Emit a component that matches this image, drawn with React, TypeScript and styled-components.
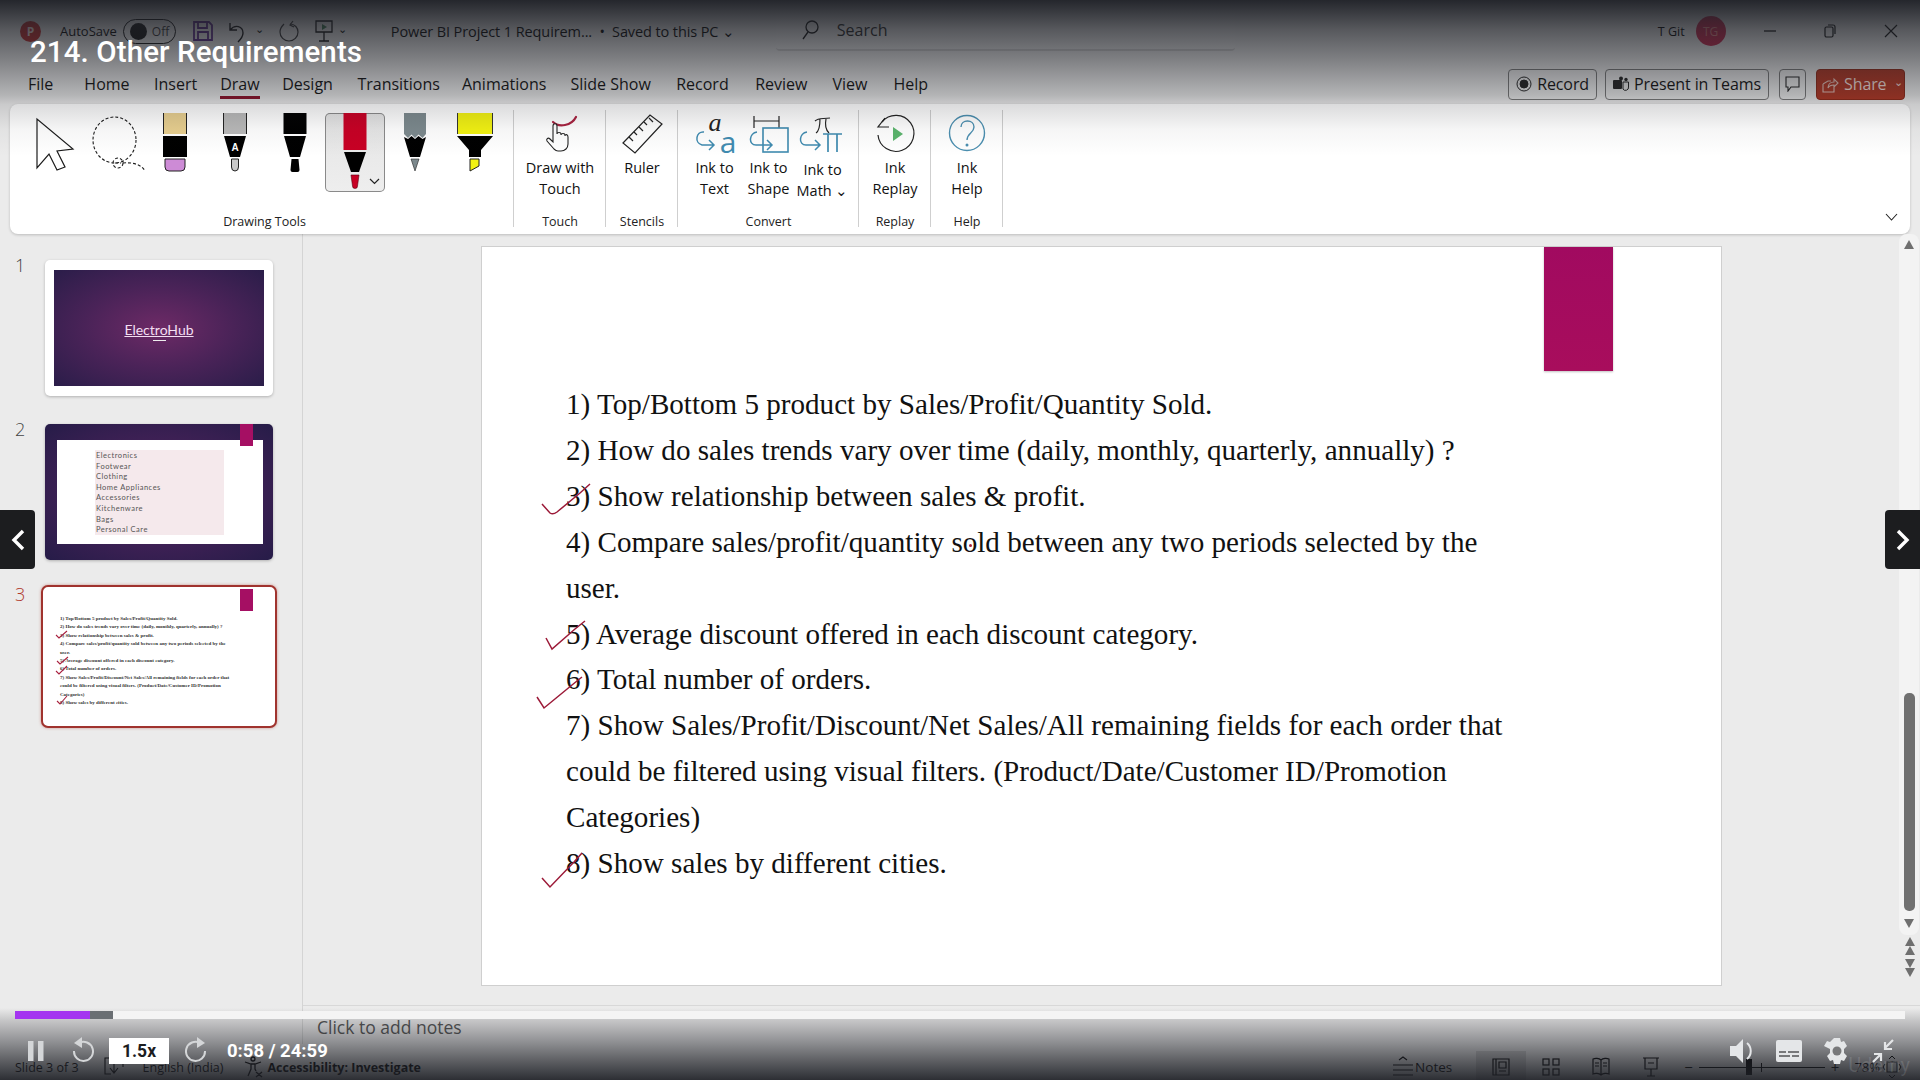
import React from "react";
import styled, { createGlobalStyle } from "styled-components";

const GlobalStyle = createGlobalStyle`
  html, body {
    margin: 0;
    padding: 0;
    background: #ebebeb;
    overflow: hidden;
  }
  * {
    box-sizing: border-box;
  }
`;

const UI_FONT = `"Open Sans", "Noto Sans", sans-serif`;

const tabs = [
  { name: "File", gap: 28 },
  { name: "Home", gap: 31 },
  { name: "Insert", gap: 24.5 },
  { name: "Draw", gap: 23, active: true },
  { name: "Design", gap: 22.5 },
  { name: "Transitions", gap: 24.5 },
  { name: "Animations", gap: 22 },
  { name: "Slide Show", gap: 24 },
  { name: "Record", gap: 25.4 },
  { name: "Review", gap: 26.5 },
  { name: "View", gap: 25 },
  { name: "Help", gap: 26 },
];

const requirements = [
  { text: "1) Top/Bottom 5 product by Sales/Profit/Quantity Sold." },
  { text: "2) How do sales trends vary over time (daily, monthly, quarterly, annually) ?" },
  { text: "3) Show relationship between sales & profit.", tick: "M-24 30 L-16 39 Q-13 41 -9 38 L14 19 L24 10" },
  { text: "4) Compare sales/profit/quantity sold between any two periods selected by the user.", dot: true },
  { text: "5) Average discount offered in each discount category.", tick: "M-20 26 L-14 37 L9 17 L19 9" },
  { text: "6) Total number of orders.", tick: "M-29 40 L-22 51 L6 28 L16 20" },
  { text: "7) Show Sales/Profit/Discount/Net Sales/All remaining fields for each order that could be filtered using visual filters. (Product/Date/Customer ID/Promotion Categories)" },
  { text: "8) Show sales by different cities.", tick: "M-24 37 L-16 46 L8 21 L16 12" },
];

const categories = [
  "Electronics",
  "Footwear",
  "Clothing",
  "Home Appliances",
  "Accessories",
  "Kitchenware",
  "Bags",
  "Personal Care",
];

const miniLines = [
  "1) Top/Bottom 5 product by Sales/Profit/Quantity Sold.",
  "2) How do sales trends vary over time (daily, monthly, quarterly, annually) ?",
  "3) Show relationship between sales & profit.",
  "4) Compare sales/profit/quantity sold between any two periods selected by the",
  "user.",
  "5) Average discount offered in each discount category.",
  "6) Total number of orders.",
  "7) Show Sales/Profit/Discount/Net Sales/All remaining fields for each order that",
  "could be filtered using visual filters. (Product/Date/Customer ID/Promotion",
  "Categories)",
  "8) Show sales by different cities.",
];

const App = () => {
  return (
    <Page>
      <GlobalStyle />
      <TitleBar>
        <AppLogo>P</AppLogo>
        <AutoSaveLabel>AutoSave</AutoSaveLabel>
        <Toggle>
          <ToggleKnob />
          Off
        </Toggle>
        <QuickIcons>
          <svg width="22" height="22" viewBox="0 0 22 22" fill="none" stroke="#5a2a8a" strokeWidth="1.8">
            <path d="M2 2h15l3 3v15H2z" />
            <path d="M6 2v6h9V2M6 20v-8h10v8" />
          </svg>
          <svg width="24" height="24" viewBox="0 0 24 24" fill="none" stroke="#111" strokeWidth="1.4">
            <path d="M3 4v7h7M3 11c5-6 13-4 13 3 0 4-3 7-5 9" />
          </svg>
          <TinyCaret>⌄</TinyCaret>
          <svg width="24" height="24" viewBox="0 0 24 24" fill="none" stroke="#333" strokeWidth="1.2">
            <path d="M16 2l-3 4 4 2M13 5c5 0 8 4 8 8a9 9 0 1 1-18 0c0-4 2-6 4-8" />
          </svg>
          <svg width="20" height="24" viewBox="0 0 20 24" fill="none" stroke="#111" strokeWidth="1.3">
            <path d="M2 2h16v11H2zM10 13v9M5 22h10" />
            <path d="M8 5l5 3-5 3z" fill="#3b7a50" stroke="none" />
          </svg>
          <TinyCaret>⌄</TinyCaret>
        </QuickIcons>
        <DocTitle>Power BI Project 1 Requirem...&nbsp; •&nbsp; Saved to this PC&nbsp;⌄</DocTitle>
        <SearchBox>
          <svg width="18" height="20" viewBox="0 0 18 20" fill="none" stroke="#111" strokeWidth="1.3">
            <circle cx="11" cy="7" r="6" />
            <path d="M7 12l-5 7" />
          </svg>
          <span>Search</span>
        </SearchBox>
        <UserName>T Git</UserName>
        <Avatar>TG</Avatar>
        <WindowButtons>
          <svg width="12" height="12" viewBox="0 0 12 12" stroke="#111" strokeWidth="1.3">
            <path d="M0 6h12" />
          </svg>
          <svg width="14" height="14" viewBox="0 0 14 14" fill="none" stroke="#111" strokeWidth="1.2">
            <rect x="2" y="3" width="8" height="10" rx="1.5" />
            <path d="M5 1h5a2 2 0 0 1 2 2v7" />
          </svg>
          <svg width="14" height="14" viewBox="0 0 14 14" stroke="#111" strokeWidth="1.2">
            <path d="M1 1l12 12M13 1L1 13" />
          </svg>
        </WindowButtons>
      </TitleBar>

      <TabRow>
        {tabs.map((tab) => (
          <Tab key={tab.name} $gap={tab.gap} $active={tab.active}>
            {tab.name}
          </Tab>
        ))}
        <TabActions>
          <RecordButton>
            <svg width="16" height="16" viewBox="0 0 16 16" fill="none" stroke="#222" strokeWidth="1">
              <circle cx="8" cy="8" r="7" />
              <circle cx="8" cy="8" r="4" fill="#222" />
            </svg>
            Record
          </RecordButton>
          <ActionButton>
            <svg width="16" height="16" viewBox="0 0 16 16" fill="#222">
              <rect x="0" y="4" width="9" height="9" rx="1" />
              <circle cx="8" cy="2.5" r="2" />
              <circle cx="13" cy="3.5" r="1.7" />
              <path d="M10 6h5.5v5a3 3 0 0 1-5.5 2z" fill="none" stroke="#222" />
            </svg>
            Present in Teams
          </ActionButton>
          <IconAction>
            <svg width="15" height="16" viewBox="0 0 15 16" fill="none" stroke="#222" strokeWidth="1.1">
              <path d="M1 1h13v10H6l-3 4v-4H1z" />
            </svg>
          </IconAction>
          <ShareButton>
            <svg width="17" height="17" viewBox="0 0 17 17" fill="none" stroke="#e4c0b8" strokeWidth="1.1">
              <path d="M1 8v8h11v-5M1 8l5-3h3M6 12c0-4 3-6 6-6V3l4 4-4 4V9c-3 0-5 1-6 3z" />
            </svg>
            Share
            <ShareCaret>⌄</ShareCaret>
          </ShareButton>
        </TabActions>
      </TabRow>

      <Ribbon>
        <RibbonGroup $width={504}>
          <ToolRow>
            <Tool>
              <svg width="60" height="79" viewBox="0 0 60 79" fill="#fff" stroke="#1c1c1c" strokeWidth="1.2">
                <path d="M13 6v49l12-14 8 16 8-3-8-16 16-2z" transform="translate(-1 0)" />
              </svg>
            </Tool>
            <Tool>
              <svg width="60" height="79" viewBox="0 0 60 79" fill="none" stroke="#1c1c1c" strokeWidth="1.1" strokeDasharray="3 2">
                <ellipse cx="29.5" cy="27" rx="21.5" ry="23" />
                <circle cx="33" cy="50" r="5" />
                <path d="M30 50h6M38 50c10-1 19 2 22 8" />
              </svg>
            </Tool>
            <Tool>
              <svg width="60" height="79" viewBox="0 0 60 79">
                <rect x="18.5" y="0" width="23" height="21" fill="#e8cf8f" />
                <path d="M18.5 0v21M41.5 0v21" stroke="#222" />
                <rect x="18" y="23" width="24" height="21" fill="#000" />
                <path d="M20 46h20v8a4 4 0 0 1-4 4H24a4 4 0 0 1-4-4z" fill="#cd8bd6" stroke="#222" />
              </svg>
            </Tool>
            <Tool>
              <svg width="60" height="79" viewBox="0 0 60 79">
                <rect x="18.5" y="0" width="23" height="21" fill="#b9b9b9" />
                <path d="M18.5 0v21M41.5 0v21" stroke="#222" />
                <path d="M19 23h22l-6 21H25z" fill="#000" />
                <text x="30" y="38" textAnchor="middle" fontSize="10" fontWeight="700" fontFamily="Liberation Sans" fill="#fff">A</text>
                <path d="M26.5 46h7v8a3.5 4 0 0 1-7 0z" fill="#c9c9c9" stroke="#222" />
              </svg>
            </Tool>
            <Tool>
              <svg width="60" height="79" viewBox="0 0 60 79">
                <rect x="18.5" y="0" width="23" height="21" fill="#000" />
                <path d="M19 23h22l-6 21H25z" fill="#000" />
                <path d="M26.5 46h7l1 11a2 2 0 0 1-2 2h-5a2 2 0 0 1-2-2z" fill="#000" />
              </svg>
            </Tool>
            <Tool $selected>
              <svg width="60" height="79" viewBox="0 0 60 79">
                <rect x="18.5" y="0" width="23" height="37" fill="#c80024" />
                <path d="M19 39h22l-7 20h-8z" fill="#000" />
                <path d="M26 62h8l-1.5 11a2 2 0 0 1-5 0z" fill="#c80024" stroke="#5a0010" strokeWidth=".6" />
                <path d="M45 66l4.500 4.500L54 66" fill="none" stroke="#222" strokeWidth="1.2" />
              </svg>
            </Tool>
            <Tool>
              <svg width="60" height="79" viewBox="0 0 60 79">
                <path d="M19 0h22v21l-3.500 4-4-3.500-3.500 3.500-3.500-3.500-3.500 3.500-4-4z" fill="#7c898d" />
                <path d="M19 24l4 2 3.500-3 3.500 3 3.500-3 4 3 3.500-2-6 20H25z" fill="#000" />
                <path d="M26 46h8l-4 12z" fill="#7c898d" stroke="#222" strokeWidth=".6" />
              </svg>
            </Tool>
            <Tool>
              <svg width="60" height="79" viewBox="0 0 60 79">
                <rect x="12" y="0" width="36" height="21" fill="#f2f212" />
                <path d="M12.500 0v21M47.500 0v21" stroke="#333" />
                <path d="M12 23h36L36 37v7H24v-7z" fill="#000" />
                <path d="M25 46h9v7l-9 5z" fill="#f2f212" stroke="#222" />
              </svg>
            </Tool>
          </ToolRow>
          <DrawingToolsLabel>Drawing Tools</DrawingToolsLabel>
        </RibbonGroup>

        <RibbonGroup $width={92}>
          <LargeItem>
            <svg width="60" height="46" viewBox="0 0 60 46" fill="none">
              <path d="M23 9c3 3 7 4 12 3s9-4 11-8" stroke="#a8213f" strokeWidth="2.2" strokeLinecap="round" />
              <path
                transform="translate(-2 -2)"
                d="M26 38l-7-8c-1-2 1-4 3-2l3 3V15c0-3 4-3 4 0v8c0-2 4-2 4 0v1c0-2 4-2 4 0v1c0-2 3-2 3 1v7c0 4-3 7-7 7h-3c-2 0-3-1-4-2z"
                fill="#fff"
                stroke="#222"
                strokeWidth="1.1"
              />
            </svg>
            <ItemLabel>
              Draw with
              <br />
              Touch
            </ItemLabel>
          </LargeItem>
          <GroupLabel>Touch</GroupLabel>
        </RibbonGroup>

        <RibbonGroup $width={72}>
          <LargeItem>
            <svg width="44" height="46" viewBox="0 0 44 46" fill="none" stroke="#222" strokeWidth="1.2">
              <path d="M3 30L30 2l12 9-27 29z" />
              <path d="M9 24l4 4M14 19l3 3M19 14l4 4M24 9l3 3M29 5l4 4" />
            </svg>
            <ItemLabel>Ruler</ItemLabel>
          </LargeItem>
          <GroupLabel>Stencils</GroupLabel>
        </RibbonGroup>

        <RibbonGroup $width={181}>
          <ConvertRow>
            <LargeItem $width={54}>
              <svg width="54" height="46" viewBox="0 0 54 46">
                <text x="27" y="18" fontFamily="Liberation Serif" fontStyle="italic" fontSize="26" fill="#222" textAnchor="middle">a</text>
                <path d="M16 19c-8-1-10 11-2 13h12M21 27l5 5-5 5" fill="none" stroke="#3f8bb0" strokeWidth="1.5" />
                <text x="40" y="40" fontFamily="Open Sans" fontSize="30" fill="#3f8bb0" textAnchor="middle">a</text>
              </svg>
              <ItemLabel>
                Ink to
                <br />
                Text
              </ItemLabel>
            </LargeItem>
            <LargeItem $width={54}>
              <svg width="54" height="46" viewBox="0 0 54 46" fill="none">
                <path d="M12 3v12M37 3v12M12 8h25" stroke="#222" strokeWidth="1.2" />
                <rect x="21" y="15" width="25" height="24" stroke="#3f8bb0" strokeWidth="1.6" />
                <path d="M15 19c-8 1-9 13-1 13h16M25 27l5 5-5 5" stroke="#3f8bb0" strokeWidth="1.5" />
              </svg>
              <ItemLabel>
                Ink to
                <br />
                Shape
              </ItemLabel>
            </LargeItem>
            <LargeItem $width={54}>
              <svg width="54" height="46" viewBox="0 0 54 46" fill="none">
                <path d="M19 8c3-3 6-2 15-3M24 6c0 6-1 12-4 14M30 6c-1 5 0 11 3 14" stroke="#222" strokeWidth="1.2" />
                <path d="M11 19c-8 1-9 13-1 13h14M19 27l5 5-5 5" stroke="#3f8bb0" strokeWidth="1.5" />
                <path d="M27 21h19M32 21v18M41 21v18" stroke="#3f8bb0" strokeWidth="1.7" />
              </svg>
              <MathLabel>
                Ink to
                <br />
                Math ⌄
              </MathLabel>
            </LargeItem>
          </ConvertRow>
          <GroupLabel>Convert</GroupLabel>
        </RibbonGroup>

        <RibbonGroup $width={72}>
          <LargeItem>
            <svg width="44" height="46" viewBox="0 0 44 46" fill="none">
              <path d="M9 9a18 18 0 1 1-4 13" stroke="#222" strokeWidth="1.2" />
              <path d="M12 5L5 14h11" stroke="#222" strokeWidth="1.2" />
              <path d="M20 14l10 7-10 7z" fill="#5bb56d" />
            </svg>
            <ItemLabel>
              Ink
              <br />
              Replay
            </ItemLabel>
          </LargeItem>
          <GroupLabel>Replay</GroupLabel>
        </RibbonGroup>

        <RibbonGroup $width={72}>
          <LargeItem>
            <svg width="44" height="46" viewBox="0 0 44 46" fill="none" stroke="#4b8fb0" strokeWidth="1.4">
              <circle cx="22" cy="20" r="17.500" />
              <path d="M16 14c0-8 13-8 13 0 0 6-7 6-7 13" />
              <circle cx="22" cy="32" r=".8" fill="#4b8fb0" />
            </svg>
            <ItemLabel>
              Ink
              <br />
              Help
            </ItemLabel>
          </LargeItem>
          <GroupLabel>Help</GroupLabel>
        </RibbonGroup>

        <RibbonCollapse>
          <svg width="13" height="8" viewBox="0 0 13 8" fill="none" stroke="#222" strokeWidth="1.1">
            <path d="M1 1l5.500 6L12 1" />
          </svg>
        </RibbonCollapse>
      </Ribbon>

      <Workspace>
        <Sidebar>
          <ThumbRow $height={164}>
            <ThumbNumber>1</ThumbNumber>
            <ThumbCard>
              <TitleSlide>
                <TitleSlideName>ElectroHub</TitleSlideName>
                <TitleSlideDash />
              </TitleSlide>
            </ThumbCard>
          </ThumbRow>
          <ThumbRow $height={161}>
            <ThumbNumber>2</ThumbNumber>
            <DarkThumbCard>
              <ThumbTab $left={195} $top={0} $height={22} />
              <WhitePanel>
                <CategoryTable>
                  {categories.map((name) => (
                    <CategoryRow key={name}>{name}</CategoryRow>
                  ))}
                </CategoryTable>
              </WhitePanel>
            </DarkThumbCard>
          </ThumbRow>
          <ThumbRow $height={160}>
            <ThumbNumber $current>3</ThumbNumber>
            <SelectedCard>
              <ThumbTab $left={197} $top={2} $height={22} />
              <MiniText>
                {miniLines.map((line) => (
                  <MiniLine key={line}>{line}</MiniLine>
                ))}
              </MiniText>
              <MiniInk width="236" height="143" viewBox="0 0 236 143">
                <path d="M15 50l3 3 8-7M16 76l3 3 8-7M15 86l3 3 8-8M16 116l3 3 7-8" />
              </MiniInk>
            </SelectedCard>
          </ThumbRow>
        </Sidebar>

        <Editor>
          <Slide>
            <SlideTab />
            <RequirementList>
              {requirements.map((item) => (
                <Requirement key={item.text}>
                  {item.text}
                  {item.tick && (
                    <InkMark width="1" height="1" viewBox="0 0 1 1">
                      <path d={item.tick} />
                    </InkMark>
                  )}
                  {item.dot && <InkDot />}
                </Requirement>
              ))}
            </RequirementList>
          </Slide>
          <ScrollBar>
            <ScrollArrow $up />
            <ScrollThumb />
            <ScrollArrow />
          </ScrollBar>
          <PageJump>
            <JumpStack>
              <ScrollArrow $up />
              <ScrollArrow $up />
            </JumpStack>
            <JumpStack>
              <ScrollArrow />
              <ScrollArrow />
            </JumpStack>
          </PageJump>
        </Editor>
      </Workspace>

      <NotesPane>
        <NotesSideCell />
        <NotesText>Click to add notes</NotesText>
      </NotesPane>

      <StatusBar>
        <StatusLeft>
          <span>Slide 3 of 3</span>
          <svg width="20" height="22" viewBox="0 0 20 22" fill="none" stroke="#000" strokeWidth="1.1">
            <path d="M7 2H1v16h6M13 2h6v9M10 7v9M6 12l4 5 4-5" />
          </svg>
          <span>English (India)</span>
          <svg width="20" height="22" viewBox="0 0 20 22" fill="none" stroke="#000" strokeWidth="1.3">
            <circle cx="9" cy="3" r="2" />
            <path d="M1 6l6 2h4l6-2M7 8v5l-3 7M11 8v5l1 2M12 16l6 5M18 16l-6 5" />
          </svg>
          <AccessibilityText>Accessibility: Investigate</AccessibilityText>
        </StatusLeft>
        <StatusRight>
          <NotesToggle>
            <svg width="20" height="24" viewBox="0 0 20 24" fill="none" stroke="#000" strokeWidth="1.1">
              <path d="M6 5l4-3 4 3M0 10h20M0 15h20M0 20h20" />
            </svg>
            Notes
          </NotesToggle>
          <ViewButton $active>
            <svg width="18" height="19" viewBox="0 0 18 19" fill="none" stroke="#000" strokeWidth="1.2">
              <path d="M1 1h16v16H1zM4 1v16M7 4h7v6H7zM7 13h7" />
            </svg>
          </ViewButton>
          <ViewButton>
            <svg width="18" height="18" viewBox="0 0 18 18" fill="none" stroke="#000" strokeWidth="1.2">
              <rect x="1" y="1" width="6" height="6" />
              <rect x="11" y="1" width="6" height="6" />
              <rect x="1" y="11" width="6" height="6" />
              <rect x="11" y="11" width="6" height="6" />
            </svg>
          </ViewButton>
          <ViewButton>
            <svg width="18" height="20" viewBox="0 0 18 20" fill="none" stroke="#000" strokeWidth="1.2">
              <path d="M9 3C7 1 3 1 1 2v15c2-1 6-1 8 1 2-2 6-2 8-1V2c-2-1-6-1-8 1zM9 3v15M3 6h4M3 9h4M11 6h4M11 9h4" />
            </svg>
          </ViewButton>
          <ViewButton>
            <svg width="18" height="20" viewBox="0 0 18 20" fill="none" stroke="#000" strokeWidth="1.2">
              <path d="M1 1h16M3 1v11h12V1M9 12v7M5 19h8M6 6h6" />
            </svg>
          </ViewButton>
          <ZoomSlider>
            <ZoomSign>−</ZoomSign>
            <ZoomTrack>
              <ZoomThumb />
              <ZoomMid />
            </ZoomTrack>
            <ZoomSign>+</ZoomSign>
          </ZoomSlider>
          <ZoomValue>78%</ZoomValue>
          <svg width="20" height="24" viewBox="0 0 20 24" fill="none" stroke="#000" strokeWidth="1">
            <rect x="5" y="7" width="10" height="10" />
            <path d="M3 9l-2 3 2 3M17 9l2 3-2 3M7 4l3-3 3 3M7 20l3 3 3-3" />
          </svg>
        </StatusRight>
      </StatusBar>

      <TopShade />
      <BottomShade />
      <VideoTitle>214. Other Requirements</VideoTitle>

      <NavButton $side="left">
        <svg width="14" height="22" viewBox="0 0 14 22" fill="none" stroke="#fff" strokeWidth="3.400">
          <path d="M12 2L3 11l9 9" />
        </svg>
      </NavButton>
      <NavButton $side="right">
        <svg width="14" height="22" viewBox="0 0 14 22" fill="none" stroke="#fff" strokeWidth="3.400">
          <path d="M2 2l9 9-9 9" />
        </svg>
      </NavButton>

      <PlayerPanel>
        <ProgressTrack>
          <ProgressBuffered />
          <ProgressPlayed />
        </ProgressTrack>
        <PlayerControls>
          <PlayerLeft>
            <svg width="18" height="20" viewBox="0 0 18 20" fill="#d4d6d8">
              <rect x="1" y="0" width="5.500" height="20" />
              <rect x="11" y="0" width="5.500" height="20" />
            </svg>
            <RewindIcon width="22" height="28" viewBox="0 0 22 28" fill="none" stroke="#d4d6d8" strokeWidth="2">
              <path d="M7 6a9.500 9.500 0 1 1-5 8" />
              <path d="M10 0v11L2 6z" fill="#d4d6d8" stroke="none" />
            </RewindIcon>
            <SpeedBadge>1.5x</SpeedBadge>
            <ForwardIcon width="22" height="28" viewBox="0 0 22 28" fill="none" stroke="#d4d6d8" strokeWidth="2">
              <path d="M15 6a9.500 9.500 0 1 0 5 8" />
              <path d="M12 0v11l8-5z" fill="#d4d6d8" stroke="none" />
            </ForwardIcon>
            <TimeCode>0:58 / 24:59</TimeCode>
          </PlayerLeft>
          <PlayerRight>
            <svg width="26" height="28" viewBox="0 0 26 28" fill="#e4e6e8">
              <path d="M1 9h6l7-7v24l-7-7H1z" />
              <path d="M18 6c5 4 5 12 0 16" fill="none" stroke="#e4e6e8" strokeWidth="2" />
            </svg>
            <svg width="26" height="22" viewBox="0 0 26 22" fill="#e4e6e8">
              <path d="M2 0h22a2 2 0 0 1 2 2v18a2 2 0 0 1-2 2H2a2 2 0 0 1-2-2V2a2 2 0 0 1 2-2z" />
              <path d="M3 11h7v2H3zM12 11h11v2H12zM3 15h11v2H3zM16 15h7v2h-7z" fill="#77787a" />
            </svg>
            <svg width="26" height="26" viewBox="0 0 26 26" fill="#e4e6e8">
              <path d="M10 0h6l1 4 3-1 3 5-3 3v4l3 3-3 5-3-1-1 4h-6l-1-4-3 1-3-5 3-3v-4L0 8l3-5 3 1z" />
              <circle cx="13" cy="13" r="4.500" fill="#77787a" />
            </svg>
            <svg width="24" height="26" viewBox="0 0 24 26" fill="none" stroke="#e4e6e8" strokeWidth="2.200">
              <path d="M22 2l-8 8M14 4v7h7M2 24l8-8M3 16h7v7" />
            </svg>
          </PlayerRight>
        </PlayerControls>
      </PlayerPanel>
      <Watermark>Udemy</Watermark>
    </Page>
  );
};

export default App;

const Page = styled.div`
  position: relative;
  width: 1920px;
  height: 1080px;
  display: flex;
  flex-direction: column;
  overflow: hidden;
  background: #ebebeb;
  font-family: ${UI_FONT};
  color: #222;
`;

const TitleBar = styled.div`
  height: 62px;
  display: flex;
  align-items: center;
  padding: 0 22px 0 20px;
  font-size: 14.5px;
  color: #000;
  flex-shrink: 0;
`;

const AppLogo = styled.div`
  width: 21px;
  height: 21px;
  border-radius: 50%;
  background: #c22a2a;
  color: #f5dede;
  font-size: 12px;
  font-weight: 700;
  display: flex;
  align-items: center;
  justify-content: center;
`;

const AutoSaveLabel = styled.span`
  margin-left: 19px;
  font-size: 13px;
`;

const Toggle = styled.div`
  margin-left: 6px;
  width: 53px;
  height: 25px;
  border: 1px solid #111;
  border-radius: 13px;
  display: flex;
  align-items: center;
  gap: 5px;
  padding-left: 6px;
  font-size: 12px;
  color: #333;
`;

const ToggleKnob = styled.div`
  width: 17px;
  height: 17px;
  border-radius: 50%;
  background: #111;
`;

const QuickIcons = styled.div`
  margin-left: 16px;
  width: 172px;
  display: flex;
  align-items: center;
  gap: 13px;
`;

const TinyCaret = styled.span`
  margin: -6px 0 0 -9px;
  font-size: 11px;
`;

const DocTitle = styled.div`
  margin-left: 27px;
  width: 385px;
  font-size: 14.5px;
  letter-spacing: -0.1px;
  white-space: nowrap;
`;

const SearchBox = styled.div`
  width: 459px;
  height: 40px;
  display: flex;
  align-items: center;
  gap: 18px;
  padding-left: 25px;
  background: rgba(255, 255, 255, 0.08);
  border-bottom: 2px solid rgba(0, 0, 0, 0.12);
  border-radius: 4px;
  font-size: 16px;
  color: #222;
`;

const UserName = styled.span`
  margin-left: 423px;
  font-size: 12.5px;
`;

const Avatar = styled.div`
  margin-left: 11px;
  width: 30px;
  height: 30px;
  border-radius: 50%;
  background: #c8244a;
  color: #e88;
  font-size: 12px;
  display: flex;
  align-items: center;
  justify-content: center;
`;

const WindowButtons = styled.div`
  margin-left: 38px;
  flex: 1;
  display: flex;
  align-items: center;
  justify-content: space-between;
`;

const TabRow = styled.div`
  height: 42px;
  padding-top: 2px;
  display: flex;
  align-items: center;
  font-size: 16px;
  color: #111;
  flex-shrink: 0;
`;

const Tab = styled.div<{ $gap: number; $active?: boolean }>`
  position: relative;
  margin-left: ${(p) => p.$gap}px;
  font-weight: ${(p) => (p.$active ? 500 : 400)};
  &::after {
    content: "";
    display: ${(p) => (p.$active ? "block" : "none")};
    position: absolute;
    left: 0;
    right: 0;
    bottom: -4px;
    height: 3px;
    background: #8a1027;
  }
`;

const TabActions = styled.div`
  margin-left: auto;
  margin-right: 15px;
  display: flex;
  align-items: center;
  gap: 10px;
`;

const ActionButton = styled.div`
  height: 31px;
  padding: 0 7px;
  display: flex;
  align-items: center;
  gap: 5px;
  border: 1px solid #777;
  border-radius: 4px;
  font-size: 16px;
  letter-spacing: -0.1px;
`;

const RecordButton = styled(ActionButton)`
  margin-right: -2px;
`;

const IconAction = styled(ActionButton)`
  width: 27px;
  padding: 0;
  justify-content: center;
`;

const ShareButton = styled(ActionButton)`
  width: 89px;
  padding: 0 0 0 5px;
  background: #b03522;
  border-color: #8d2716;
  color: #f4dfda;
`;

const ShareCaret = styled.span`
  margin: -6px 0 0 2px;
  font-size: 11px;
`;

const Ribbon = styled.div`
  position: relative;
  height: 130px;
  margin: 0 10px;
  display: flex;
  background: #fff;
  border-radius: 8px;
  box-shadow: 0 1px 3px rgba(0, 0, 0, 0.2);
  flex-shrink: 0;
`;

const RibbonGroup = styled.div<{ $width: number }>`
  position: relative;
  width: ${(p) => p.$width}px;
  display: flex;
  flex-direction: column;
  align-items: center;
  padding-top: 9px;
  &::after {
    content: "";
    position: absolute;
    right: 0;
    top: 6px;
    bottom: 7px;
    width: 1px;
    background: #cfcfcf;
  }
`;

const ToolRow = styled.div`
  align-self: flex-start;
  padding-left: 15px;
  display: flex;
  height: 109px;
`;

const Tool = styled.div<{ $selected?: boolean }>`
  width: 60px;
  height: 79px;
  border-radius: 5px;
  ${(p) =>
    p.$selected
      ? `
    background: linear-gradient(#e4e4e4, #eeeeee);
    box-shadow: inset 0 0 0 1px #8a8a8a;
  `
      : ""}
`;

const GroupLabel = styled.div`
  position: absolute;
  left: 0;
  right: 0;
  bottom: 3px;
  text-align: center;
  font-size: 12.5px;
  line-height: 18px;
  color: #222;
`;

const DrawingToolsLabel = styled(GroupLabel)`
  padding-left: 5px;
`;

const LargeItem = styled.div<{ $width?: number }>`
  width: ${(p) => (p.$width ? `${p.$width}px` : "100%")};
  display: flex;
  flex-direction: column;
  align-items: center;
  & > svg {
    overflow: visible;
  }
`;

const ItemLabel = styled.div`
  margin-top: -2px;
  font-size: 14.5px;
  line-height: 21px;
  text-align: center;
  white-space: nowrap;
  color: #111;
`;

const MathLabel = styled(ItemLabel)`
  margin-top: 0;
`;

const ConvertRow = styled.div`
  display: flex;
  justify-content: center;
`;

const RibbonCollapse = styled.div`
  position: absolute;
  right: 12px;
  bottom: 13px;
  display: flex;
`;

const Workspace = styled.div`
  height: 771px;
  display: flex;
  flex-shrink: 0;
`;

const Sidebar = styled.div`
  width: 303px;
  border-right: 1px solid #d4d4d4;
  padding-top: 26px;
  flex-shrink: 0;
`;

const ThumbRow = styled.div<{ $height: number }>`
  position: relative;
  height: ${(p) => p.$height}px;
  padding-left: 45px;
`;

const ThumbNumber = styled.div<{ $current?: boolean }>`
  position: absolute;
  left: 15px;
  top: ${(p) => (p.$current ? "-3px" : "-7px")};
  font-size: 18px;
  font-weight: 300;
  color: ${(p) => (p.$current ? "#b0392b" : "#444")};
`;

const ThumbCard = styled.div`
  width: 228px;
  height: 136px;
  padding: 10px 9px;
  background: #fff;
  border-radius: 5px;
  box-shadow: 0 1px 3px rgba(0, 0, 0, 0.25);
`;

const TitleSlide = styled.div`
  height: 116px;
  display: flex;
  flex-direction: column;
  align-items: center;
  padding-top: 53px;
  background: radial-gradient(ellipse at center, #6d2a66 0%, #4a2358 50%, #2a1d49 100%);
`;

const TitleSlideName = styled.div`
  font-size: 14px;
  line-height: 14px;
  color: #f3dff2;
  text-decoration: underline;
  font-family: "Lato", sans-serif;
`;

const TitleSlideDash = styled.div`
  margin-top: 3px;
  width: 13px;
  height: 1px;
  background: #eee;
`;

const DarkThumbCard = styled.div`
  position: relative;
  width: 228px;
  height: 136px;
  padding: 16px 10px 0 12px;
  background: radial-gradient(ellipse at center, #6d2a66 0%, #3d2054 55%, #261c48 100%);
  border-radius: 5px;
  box-shadow: 0 1px 3px rgba(0, 0, 0, 0.25);
`;

const ThumbTab = styled.div<{ $left: number; $top: number; $height: number }>`
  position: absolute;
  top: ${(p) => p.$top}px;
  left: ${(p) => p.$left}px;
  width: 13px;
  height: ${(p) => p.$height}px;
  background: #a50f63;
  z-index: 1;
`;

const WhitePanel = styled.div`
  height: 104px;
  padding: 10px 39px 0 38px;
  background: #fff;
`;

const CategoryTable = styled.div`
  height: 85px;
  background: #f5e9ec;
`;

const CategoryRow = styled.div`
  height: 10.6px;
  font-size: 7.500px;
  line-height: 11px;
  padding-left: 1px;
  color: #555;
  font-family: "Lato", sans-serif;
  letter-spacing: 0.5px;
  white-space: nowrap;
`;

const SelectedCard = styled.div`
  position: absolute;
  left: 41px;
  top: 0;
  width: 236px;
  height: 143px;
  padding: 28px 0 0 17px;
  background: #fff;
  border: 2px solid #a0332e;
  border-radius: 7px;
  box-shadow: 0 0 3px rgba(176, 57, 43, 0.5);
`;

const MiniText = styled.div`
  font-family: "Liberation Serif", serif;
  font-size: 5px;
  line-height: 8.4px;
  font-weight: 700;
  color: #333;
`;

const MiniLine = styled.div`
  white-space: nowrap;
`;

const MiniInk = styled.svg`
  position: absolute;
  left: -2px;
  top: -2px;
  fill: none;
  stroke: #a8213f;
  stroke-width: 1.1;
`;

const Editor = styled.div`
  position: relative;
  flex: 1;
  padding: 12px 0 0 178px;
`;

const Slide = styled.div`
  position: relative;
  width: 1241px;
  height: 740px;
  padding: 135px 0 0 84px;
  background: #fff;
  border: 1px solid #cfcfcf;
`;

const SlideTab = styled.div`
  position: absolute;
  top: 0;
  left: 1062px;
  width: 69px;
  height: 124px;
  background: linear-gradient(#a10a60, #a80d5c);
  box-shadow: 0 1px 2px rgba(0, 0, 0, 0.25);
`;

const RequirementList = styled.div`
  width: 945px;
  font-family: "Liberation Serif", serif;
  font-size: 29.1px;
  line-height: 45.9px;
  color: #111;
`;

const Requirement = styled.div`
  position: relative;
`;

const InkMark = styled.svg`
  position: absolute;
  left: 0;
  top: 0;
  overflow: visible;
  fill: none;
  stroke: #9c1a38;
  stroke-width: 1.5;
`;

const InkDot = styled.span`
  position: absolute;
  left: 403px;
  top: 24px;
  width: 3px;
  height: 3px;
  border-radius: 50%;
  background: #a8213f;
`;

const ScrollBar = styled.div`
  position: absolute;
  right: 1px;
  top: 0;
  bottom: 70px;
  width: 20px;
  padding: 6px 0 7px;
  display: flex;
  flex-direction: column;
  align-items: center;
  background: #f3f3f3;
  border-radius: 8px;
`;

const ScrollThumb = styled.div`
  margin-top: auto;
  margin-bottom: 8px;
  width: 11px;
  height: 218px;
  border-radius: 5px;
  background: #707070;
`;

const ScrollArrow = styled.div<{ $up?: boolean }>`
  width: 0;
  height: 0;
  border-left: 5.500px solid transparent;
  border-right: 5.500px solid transparent;
  ${(p) => (p.$up ? "border-bottom: 9px solid #6f6f6f;" : "border-top: 9px solid #6f6f6f;")}
`;

const PageJump = styled.div`
  position: absolute;
  right: 5px;
  top: 703px;
  display: flex;
  flex-direction: column;
  gap: 4px;
`;

const JumpStack = styled.div`
  display: flex;
  flex-direction: column;
  gap: 0;
`;

const NotesPane = styled.div`
  height: 39px;
  display: flex;
  border-top: 1px solid #d8d8d8;
  flex-shrink: 0;
`;

const NotesSideCell = styled.div`
  width: 303px;
  border-right: 1px solid #d4d4d4;
  margin-top: -1px;
  background: #ebebeb;
`;

const NotesText = styled.div`
  padding: 9px 0 0 14px;
  font-size: 17.500px;
  line-height: 24px;
  color: #555;
`;

const StatusBar = styled.div`
  height: 36px;
  display: flex;
  align-items: center;
  justify-content: space-between;
  padding: 10px 18px 0 15px;
  font-size: 12.500px;
  color: #000;
  flex-shrink: 0;
`;

const StatusLeft = styled.div`
  display: flex;
  align-items: center;
  gap: 21px;
  & > svg:first-of-type {
    margin: 0 -2px 0 4px;
  }
`;

const AccessibilityText = styled.span`
  margin-left: -18px;
  font-weight: 700;
  font-size: 12.500px;
`;

const StatusRight = styled.div`
  display: flex;
  align-items: center;
`;

const NotesToggle = styled.div`
  display: flex;
  align-items: center;
  gap: 2px;
  font-size: 13.500px;
  margin-right: 24px;
`;

const ViewButton = styled.div<{ $active?: boolean }>`
  width: 50px;
  height: 32px;
  display: flex;
  align-items: center;
  justify-content: center;
  background: ${(p) => (p.$active ? "rgba(0, 0, 0, 0.12)" : "transparent")};
`;

const ZoomSlider = styled.div`
  margin-left: 8px;
  display: flex;
  align-items: center;
  gap: 6px;
`;

const ZoomSign = styled.span`
  font-size: 15px;
`;

const ZoomTrack = styled.div`
  position: relative;
  width: 126px;
  height: 1px;
  background: #000;
`;

const ZoomThumb = styled.div`
  position: absolute;
  left: 47px;
  top: -8px;
  width: 6px;
  height: 16px;
  background: #000;
`;

const ZoomMid = styled.div`
  position: absolute;
  left: 62px;
  top: -4px;
  width: 1px;
  height: 9px;
  background: #000;
`;

const ZoomValue = styled.span`
  margin: 0 2px 0 15px;
  font-size: 13px;
`;

const TopShade = styled.div`
  position: absolute;
  inset: 0 0 auto 0;
  height: 156px;
  pointer-events: none;
  background: linear-gradient(
    rgba(30, 32, 38, 0.97) 0%,
    rgba(30, 32, 38, 0.72) 19%,
    rgba(30, 32, 38, 0.53) 38%,
    rgba(30, 32, 38, 0.27) 61%,
    rgba(30, 32, 38, 0.16) 67%,
    rgba(30, 32, 38, 0.045) 83%,
    rgba(30, 32, 38, 0) 100%
  );
`;

const BottomShade = styled.div`
  position: absolute;
  inset: auto 0 0 0;
  height: 72px;
  pointer-events: none;
  background: linear-gradient(
    rgba(30, 32, 38, 0) 0%,
    rgba(30, 32, 38, 0.18) 17%,
    rgba(30, 32, 38, 0.42) 44%,
    rgba(30, 32, 38, 0.68) 72%,
    rgba(30, 32, 38, 0.93) 100%
  );
`;

const VideoTitle = styled.div`
  position: absolute;
  left: 30px;
  top: 33px;
  font-family: "Roboto", sans-serif;
  font-size: 29.5px;
  line-height: 38px;
  font-weight: 500;
  letter-spacing: 0.1px;
  color: #fff;
`;

const NavButton = styled.div<{ $side: "left" | "right" }>`
  position: absolute;
  top: 510px;
  ${(p) => p.$side}: 0;
  width: 35px;
  height: 59px;
  display: flex;
  align-items: center;
  justify-content: center;
  background: #1c1d1f;
  border-radius: ${(p) => (p.$side === "left" ? "0 4px 4px 0" : "4px 0 0 4px")};
`;

const PlayerPanel = styled.div`
  position: absolute;
  left: 15px;
  right: 15px;
  top: 1011px;
`;

const ProgressTrack = styled.div`
  position: relative;
  height: 8px;
  background: #f4f4f4;
`;

const ProgressBuffered = styled.div`
  position: absolute;
  inset: 0 auto 0 0;
  width: 98px;
  background: #6a6f73;
`;

const ProgressPlayed = styled.div`
  position: absolute;
  inset: 0 auto 0 0;
  width: 75px;
  background: #a435f0;
`;

const PlayerControls = styled.div`
  margin-top: 18px;
  display: flex;
  align-items: center;
  justify-content: space-between;
  color: #fff;
`;

const PlayerLeft = styled.div`
  display: flex;
  align-items: center;
  padding-left: 12px;
`;

const RewindIcon = styled.svg`
  margin-left: 27px;
`;

const ForwardIcon = styled.svg`
  margin-left: 16px;
`;

const SpeedBadge = styled.div`
  margin-left: 15px;
  width: 60px;
  height: 26px;
  display: flex;
  align-items: center;
  justify-content: center;
  background: #fff;
  color: #1c1d1f;
  font-family: "Roboto", sans-serif;
  font-weight: 700;
  font-size: 17.500px;
`;

const TimeCode = styled.div`
  margin-left: 20px;
  font-family: "Roboto", sans-serif;
  font-weight: 700;
  font-size: 18.500px;
`;

const PlayerRight = styled.div`
  display: flex;
  align-items: center;
  gap: 21.500px;
  padding-right: 10px;
`;

const Watermark = styled.div`
  position: absolute;
  right: 10px;
  top: 1053px;
  font-family: "Roboto", sans-serif;
  font-size: 20px;
  color: rgba(255, 255, 255, 0.12);
`;
